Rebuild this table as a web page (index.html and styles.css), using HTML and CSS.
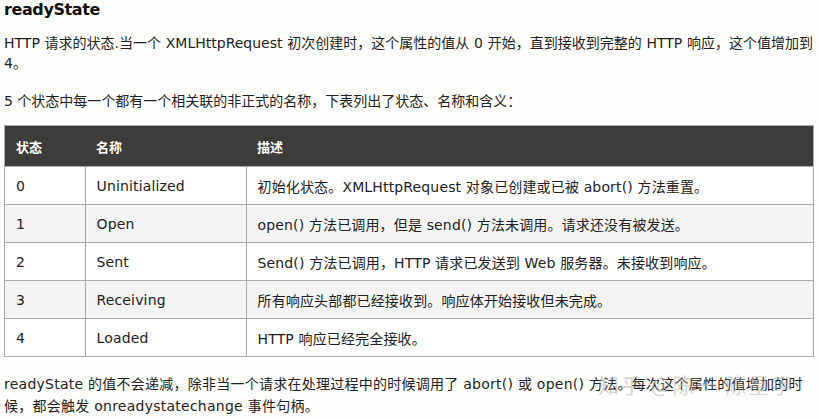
FILE: index.html
```html
<!DOCTYPE html>
<html lang="zh-CN">
<head>
<meta charset="utf-8">
<title>readyState</title>
<link rel="stylesheet" href="styles.css">
</head>
<body>
<main class="page">
  <h2 class="title">readyState</h2>
  <p class="para p1">HTTP 请求的状态.当一个 XMLHttpRequest 初次创建时，这个属性的值从 0 开始，直到接收到完整的 HTTP 响应，这个值增加到 4。</p>
  <p class="para p2">5 个状态中每一个都有一个相关联的非正式的名称，下表列出了状态、名称和含义：</p>
  <table class="states">
    <thead>
      <tr><th class="c1">状态</th><th class="c2">名称</th><th class="c3">描述</th></tr>
    </thead>
    <tbody>
      <tr><td>0</td><td>Uninitialized</td><td>初始化状态。XMLHttpRequest 对象已创建或已被 abort() 方法重置。</td></tr>
      <tr><td>1</td><td>Open</td><td>open() 方法已调用，但是 send() 方法未调用。请求还没有被发送。</td></tr>
      <tr><td>2</td><td>Sent</td><td>Send() 方法已调用，HTTP 请求已发送到 Web 服务器。未接收到响应。</td></tr>
      <tr><td>3</td><td>Receiving</td><td>所有响应头部都已经接收到。响应体开始接收但未完成。</td></tr>
      <tr><td>4</td><td>Loaded</td><td>HTTP 响应已经完全接收。</td></tr>
    </tbody>
  </table>
  <div class="last">
    <p class="para p3">readyState 的值不会递减，除非当一个请求在处理过程中的时候调用了 abort() 或 open() 方法。每次这个属性的值增加的时候，都会触发 onreadystatechange 事件句柄。</p>
    <span class="watermark">知乎 @陈一 陈星宇</span>
  </div>
</main>
</body>
</html>
```
FILE: styles.css
```css
html, body {
  margin: 0;
  padding: 0;
  background: #fefefc;
}
body {
  font-family: "DejaVu Sans", Verdana, "Noto Sans CJK SC", sans-serif;
  font-size: 14px;
  letter-spacing: 0;
  color: #222;
}
.page {
  padding: 0 4px;
}
.title {
  margin: 0;
  padding-top: 0;
  font-size: 16px;
  line-height: 20px;
  font-weight: bold;
  letter-spacing: -0.4px;
  color: #111;
}
.para {
  margin: 0;
  line-height: 20px;
}
.p1 {
  margin-top: 13px;
  word-spacing: 0.3px;
}
.p2 {
  margin-top: 18px;
}
.states {
  margin-top: 14px;
  width: 810px;
  border-collapse: collapse;
  border: 1px solid #aaa;
}
.states th {
  background: #3c3c3a;
  color: #fff;
  font-weight: bold;
  text-align: left;
  height: 40px;
  padding: 0 11px;
  font-size: 13px;
  letter-spacing: 0;
}
.states td {
  height: 37px;
  padding: 0 11px;
  border: 1px solid #aaa;
  color: #222;
  letter-spacing: 0.15px;
}
.states tbody tr:nth-child(even) td {
  background: #f4f4f4;
}
.states tbody tr:nth-child(odd) td {
  background: #fff;
}
.c1 { width: 58px; }
.c2 { width: 139px; }
.last {
  position: relative;
  margin-top: 16px;
}
.p3 {
  line-height: 22px;
  letter-spacing: 0.25px;
}
.watermark {
  position: absolute;
  left: 594px;
  top: 0;
  font-family: "Noto Sans CJK SC", sans-serif;
  font-size: 21px;
  line-height: 22px;
  color: rgba(175, 175, 175, 0.5);
  letter-spacing: 2px;
  pointer-events: none;
}
```
